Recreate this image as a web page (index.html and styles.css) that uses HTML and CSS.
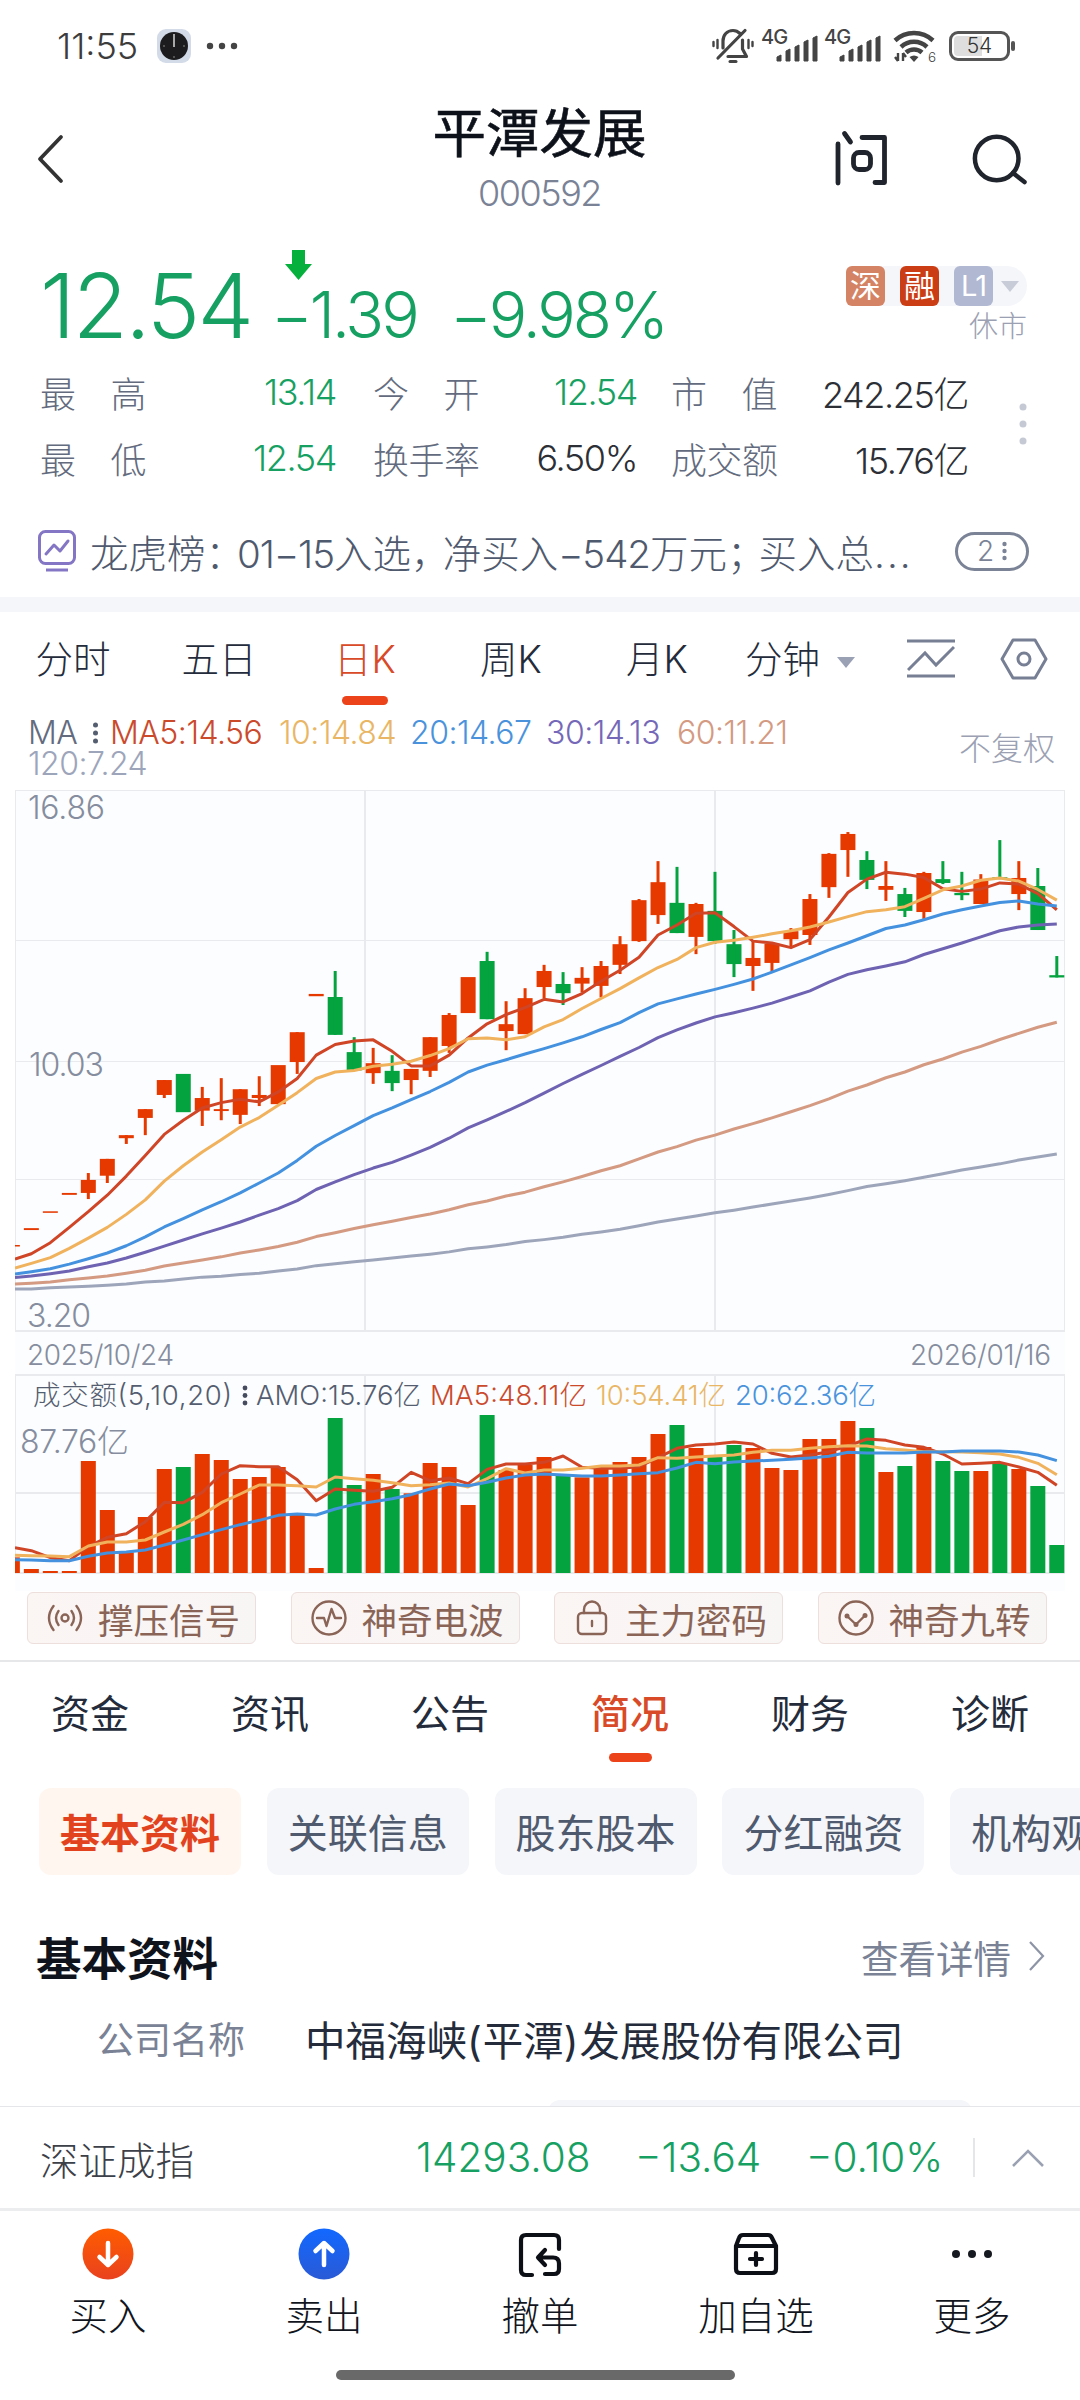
FILE: index.html
```html
<!DOCTYPE html>
<html lang="zh-CN">
<head>
    <meta charset="UTF-8">
    <meta name="viewport" content="width=device-width, initial-scale=1.0">
    <title>平潭发展 000592</title>
    <link rel="stylesheet" href="styles.css">
</head>
<body>
    <div class="status-bar">
        <span class="clock">11:55</span>
        <svg class="app-icon" width="34" height="34" viewBox="0 0 34 34"><rect width="34" height="34" rx="9" fill="#d3dbe8"/><circle cx="17" cy="17" r="14" fill="#1c1c1e"/><path d="M17 5v13" stroke="#ccc" stroke-width="1.6"/><path d="M6 17h2M26 17h2M17 27v2" stroke="#888"/></svg>
        <svg class="dots" width="32" height="8" viewBox="0 0 32 8" fill="#444"><circle cx="4" cy="4" r="3.2"/><circle cx="16" cy="4" r="3.2"/><circle cx="28" cy="4" r="3.2"/></svg>
        <div class="status-right">
            <svg width="42" height="36" viewBox="0 0 42 36" fill="none" stroke="#444" stroke-width="3.2" stroke-linecap="round" stroke-linejoin="round"><path d="M11 20v-7c0-6 4-10.500 10-10.500 3 0 5 1 7 3M16 28.500h18.500l-4-7.500v-9M33 2.500L6 30"/><path d="M18 33.500h6" stroke-width="3"/><path d="M5.500 12v8M1.500 14v4M36.500 12v8M40.500 14v4" stroke-width="2.400"/></svg>
            <div class="signal"><span>4G</span><svg width="42" height="27" viewBox="0 0 42 27" fill="#444" stroke="#444" stroke-linejoin="round"><path d="M1 26v-4l4-2v6zM10 26V16l4-2v12zM19 26V12l4-2v16zM28 26V7l4-2v21zM37 26V3l4-2v25z"/></svg></div>
            <div class="signal"><span>4G</span><svg width="42" height="27" viewBox="0 0 42 27" fill="#444" stroke="#444" stroke-linejoin="round"><path d="M1 26v-4l4-2v6zM10 26V16l4-2v12zM19 26V12l4-2v16zM28 26V7l4-2v21zM37 26V3l4-2v25z"/></svg></div>
            <svg class="wifi" width="44" height="34" viewBox="0 0 44 34" fill="none" stroke="#444" stroke-width="4.500"><path d="M2 11.500a28 28 0 0 1 38 0M8 18a19 19 0 0 1 26 0M13 23.500a12 12 0 0 1 16 0"/><path d="M16.500 28q4.500-3 9 0L21 33z" fill="#444" stroke="none"/><path d="M5 24v8M10 24v8M2 28l3 4M13 28l-3-4" stroke-width="2.400"/><text x="35" y="33" font-size="13.500" fill="#444" stroke="none">6</text></svg>
            <div class="battery"><span>54</span></div>
        </div>
    </div>

    <header class="header">
        <svg class="back" width="28" height="50" viewBox="0 0 28 50" fill="none" stroke="#333" stroke-width="3.800" stroke-linecap="round" stroke-linejoin="round"><path d="M25 3L4 25l21 22"/></svg>
        <div class="title">
            <h1>平潭发展</h1>
            <p>000592</p>
        </div>
        <svg class="ask" width="54" height="58" viewBox="0 0 54 58" fill="none" stroke="#20242c" stroke-width="4.800" stroke-linecap="round" stroke-linejoin="round"><path d="M4 14v39M10.500 3.500l6 8.500M28 7.500h22.500v45H41"/><rect x="19.500" y="22.500" width="17" height="17" rx="5.500"/></svg>
        <svg class="search" width="56" height="52" viewBox="0 0 56 52" fill="none" stroke="#20242c" stroke-width="4.500" stroke-linecap="round"><circle cx="24.700" cy="24.500" r="21.800"/><path d="M41 39l11.500 9"/></svg>
    </header>

    <section class="quote">
        <div class="price-row">
            <span class="price">12.54</span>
            <svg class="arrow" width="27" height="30" viewBox="0 0 27 30"><path d="M7 0h13v14h7L13.500 30 0 14h7z" fill="#06b03c"/></svg>
            <span class="change">−1.39</span>
            <span class="percent">−9.98%</span>
            <div class="market">
                <div class="badges">
                    <i class="badge sz">深</i><i class="badge rong">融</i><i class="badge level">L1</i><b class="caret"></b>
                </div>
                <div class="closed">休市</div>
            </div>
        </div>
        <div class="stats">
            <div class="stat"><label>最<em></em>高</label><span class="green">13.14</span></div>
            <div class="stat"><label>今<em></em>开</label><span class="green">12.54</span></div>
            <div class="stat"><label>市<em></em>值</label><span>242.25亿</span></div>
            <div class="stat"><label>最<em></em>低</label><span class="green">12.54</span></div>
            <div class="stat"><label>换手率</label><span>6.50%</span></div>
            <div class="stat"><label>成交额</label><span>15.76亿</span></div>
            <svg class="stat-more" width="8" height="42" viewBox="0 0 8 42" fill="#c4c9d4"><circle cx="4" cy="4" r="3.500"/><circle cx="4" cy="21" r="3.500"/><circle cx="4" cy="38" r="3.500"/></svg>
        </div>
        <div class="news">
            <svg width="38" height="42" viewBox="0 0 38 42" fill="none" stroke="#8476c4" stroke-width="3"><rect x="1.500" y="1.500" width="35" height="32" rx="6"/><path d="M8 24l8-9 6 6 8-10" stroke-linecap="round" stroke-linejoin="round"/><path d="M8 40h22"/></svg>
            <p>龙虎榜<i>：</i><span>01−15</span>入选<i>，</i>净买入<span>−542</span>万元<i>；</i>买入总<b>...</b></p>
            <div class="news-count">2<svg width="5" height="20" viewBox="0 0 5 20" fill="#7b8397"><circle cx="2.500" cy="3" r="2.200"/><circle cx="2.500" cy="10" r="2.200"/><circle cx="2.500" cy="17" r="2.200"/></svg></div>
        </div>
    </section>

    <nav class="periods">
        <a>分时</a><a>五日</a><a class="active">日K</a><a>周K</a><a>月K</a><a class="minute">分钟<b class="caret dark"></b></a>
        <svg class="trend" width="48" height="40" viewBox="0 0 48 40" fill="none" stroke="#777f94" stroke-width="3"><path d="M0 2h48M0 37h48M1 31l17-17 11 12L47 8"/></svg>
        <svg class="setting" width="48" height="42" viewBox="0 0 48 42" fill="none" stroke="#777f94" stroke-width="3" stroke-linejoin="round"><path d="M13 2h22l11 19-11 19H13L2 21z"/><circle cx="24" cy="21" r="6"/></svg>
    </nav>

    <div class="ma-row">
        <div class="ma">
            <span class="ma-name">MA</span><svg width="5" height="22" viewBox="0 0 5 22" fill="#555e70"><circle cx="2.500" cy="3" r="2.500"/><circle cx="2.500" cy="11" r="2.500"/><circle cx="2.500" cy="19" r="2.500"/></svg><span class="ma5">MA5:14.56</span><span class="ma10">10:14.84</span><span class="ma20">20:14.67</span><span class="ma30">30:14.13</span><span class="ma60">60:11.21</span>
            <div class="ma120">120:7.24</div>
        </div>
        <span class="adjust">不复权</span>
    </div>

    <svg class="chart" viewBox="15 789 1050 802" width="1050" height="802">
        <rect x="15" y="790" width="1050" height="801" fill="#fcfdff"/>
        <g stroke="#e9eaee" fill="none">
            <path d="M15 790.500h1050M15 940.500h1050M15 1061.500h1050M15 1179.500h1050M15.500 790V1331M1064.500 790V1331M15.500 1375V1573M1064.500 1375V1573"/>
            <path d="M15 1331h1050M15 1375h1050M15 1493h1050M15 1573h1050M365 790V1331M715 790V1331M365 1375V1573M715 1375V1573" stroke-width="2"/>
        </g>
        <g id="plot"></g>
        <g class="axis">
            <text x="28" y="818.500" textLength="77">16.86</text>
            <text x="29" y="1075.500" textLength="75">10.03</text>
            <text x="27" y="1327" textLength="64">3.20</text>
            <g class="date">
                <text x="27" y="1364.500" textLength="147">2025/10/24</text>
                <text x="910" y="1364.500" textLength="141">2026/01/16</text>
            </g>
            <text class="max" x="20" y="1453" textLength="109">87.76亿</text>
        </g>
        <g class="vol-head">
            <text x="33" y="1405" textLength="199" fill="#555e70">成交额(5,10,20)</text>
            <g fill="#444c5e"><circle cx="245" cy="1388" r="2.400"/><circle cx="245" cy="1395.500" r="2.400"/><circle cx="245" cy="1403" r="2.400"/></g>
            <text x="256" y="1405" textLength="165" fill="#555e70">AMO:15.76亿</text>
            <text x="430" y="1405" textLength="157" fill="#cb4a2c">MA5:48.11亿</text>
            <text x="596" y="1405" textLength="130" fill="#e9b665">10:54.41亿</text>
            <text x="735" y="1405" textLength="141" fill="#4a93dc">20:62.36亿</text>
        </g>
    </svg>

    <div class="signals">
        <a><svg width="36" height="36" viewBox="0 0 36 36"><circle cx="18" cy="18" r="3.500"/><path d="M11.500 11q-5 7 0 14M24.500 11q5 7 0 14M6.500 6q-9 12 0 24M29.500 6q9 12 0 24"/></svg>撑压信号</a>
        <a><svg width="36" height="36" viewBox="0 0 36 36"><circle cx="18" cy="18" r="16.500"/><path d="M6 18h7l2.500 8L20.500 9l3.500 9h6"/></svg>神奇电波</a>
        <a><svg width="36" height="36" viewBox="0 0 36 36"><rect x="4" y="13" width="28" height="21" rx="4"/><path d="M10 13V9.500a8 8 0 0 1 16 0V13M18 21v5"/></svg>主力密码</a>
        <a><svg width="36" height="36" viewBox="0 0 36 36"><circle cx="18" cy="18" r="16.500"/><path d="M9 16l9 8.500 9-9"/><g fill="#8a6557" stroke="none"><circle cx="9" cy="16" r="2.500"/><circle cx="18" cy="24.500" r="2.500"/><circle cx="27" cy="15.500" r="2.500"/></g></svg>神奇九转</a>
    </div>

    <nav class="tabs">
        <a>资金</a><a>资讯</a><a>公告</a><a class="active">简况</a><a>财务</a><a>诊断</a>
    </nav>

    <div class="pills">
        <a class="active">基本资料</a><a>关联信息</a><a>股东股本</a><a>分红融资</a><a>机构观点</a>
    </div>

    <section class="profile">
        <div class="profile-head">
            <h2>基本资料</h2>
            <a>查看详情<svg width="18" height="30" viewBox="0 0 18 30" fill="none" stroke="#8d94a6" stroke-width="2.200"><path d="M2 1l13 14L2 29"/></svg></a>
        </div>
        <div class="profile-row"><label>公司名称</label><span>中福海峡<i>(</i>平潭<i>)</i>发展股份有限公司</span></div>
        <div class="next-card"></div>
    </section>

    <div class="index-row">
        <span class="index-name">深证成指</span>
        <span class="v1">14293.08</span>
        <span class="v2">−13.64</span>
        <span class="v3">−0.10%</span>
        <svg width="32" height="18" viewBox="0 0 32 18" fill="none" stroke="#9aa1b3" stroke-width="2.600"><path d="M1 17L16 2l15 15"/></svg>
    </div>

    <footer class="actions">
        <a><svg width="52" height="52" viewBox="0 0 52 52"><defs><linearGradient id="buy" x2="0" y2="1"><stop stop-color="#ff5c00"/><stop offset="1" stop-color="#e9421f"/></linearGradient></defs><circle cx="26" cy="26" r="25.500" fill="url(#buy)"/><path d="M26 15v21M17.500 29l8.500 8 8.500-8" fill="none" stroke="#fff" stroke-width="4.500" stroke-linecap="round" stroke-linejoin="round"/></svg>买入</a>
        <a><svg width="52" height="52" viewBox="0 0 52 52"><defs><linearGradient id="sell" x2="0" y2="1"><stop stop-color="#1268ff"/><stop offset="1" stop-color="#2a5ad6"/></linearGradient></defs><circle cx="26" cy="26" r="25.500" fill="url(#sell)"/><path d="M26 37V16M17.500 23l8.500-8 8.500 8" fill="none" stroke="#fff" stroke-width="4.500" stroke-linecap="round" stroke-linejoin="round"/></svg>卖出</a>
        <a><svg width="52" height="52" viewBox="0 0 52 52" fill="none" stroke="#0c0f16" stroke-width="4.200" stroke-linecap="round" stroke-linejoin="round"><path d="M45 21V12q0-5-5-5H12q-5 0-5 5v30q0 5 5 5h6M31 22l-7 7.500 7 7.500M25 29.500h14q6 0 6 6V41q0 5-5 5h-9"/></svg>撤单</a>
        <a><svg width="52" height="52" viewBox="0 0 52 52" fill="none" stroke="#0c0f16" stroke-width="4.200" stroke-linecap="round" stroke-linejoin="round"><path d="M6 18l3-8q1-3 4-3h25q3 0 4 3l4 8v23q0 4-4 4H10q-4 0-4-4zM6 18h40M26 25v12M20 31h12"/></svg>加自选</a>
        <a><svg width="52" height="52" viewBox="0 0 52 52" fill="#16191f"><circle cx="10" cy="26" r="4"/><circle cx="26" cy="26" r="4"/><circle cx="42" cy="26" r="4"/></svg>更多</a>
    </footer>
    <div class="home-bar"></div>

    <script src="chart.js"></script>
</body>
</html>
```

FILE: styles.css
```css
* { box-sizing: border-box; }
body { margin: 0; width: 1080px; height: 2400px; overflow: hidden; background: #fff; color: #242c3b; font-family: Inter, "Noto Sans CJK SC", sans-serif; font-weight: 300; display: flex; flex-direction: column; }
h1, h2, p { margin: 0; }
i, em { font-style: normal; }
svg { flex: none; display: block; }
.green { color: #16a163; }

.status-bar { height: 92px; display: flex; align-items: center; padding-left: 57px; flex: none; }
.clock { font-size: 36px; color: #3c3c3c; width: 100px; letter-spacing: 0; }
.dots { margin-left: 15px; }
.status-right { margin-left: auto; padding-right: 70px; display: flex; align-items: center; }
.signal { width: 56px; height: 31px; position: relative; margin-left: 7px; }
.signal span { position: absolute; left: 0; top: -4px; font-size: 20px; line-height: 20px; color: #444; font-weight: 500; letter-spacing: -1px; }
.signal svg { margin: 4px 0 0 15px; }
.wifi { margin-left: 13px; overflow: visible; }
.battery { width: 61px; height: 30px; border: 3px solid #555; border-radius: 9px; margin-left: 12px; position: relative; padding: 2px; background: linear-gradient(90deg, #dedede 54%, #fff 54%) content-box; text-align: center; font-size: 21px; line-height: 20px; color: #333; }
.battery::after { content: ""; position: absolute; right: -8px; top: 7px; width: 4px; height: 10px; border-radius: 2px; background: #555; }

.header { height: 138px; display: flex; flex: none; position: relative; }
.title { flex: 1; text-align: center; padding-left: 114px; margin-right: -67px; }
.title h1 { font-size: 53.500px; line-height: 56px; font-weight: 400; color: #0d111a; margin-top: 14px; -webkit-text-stroke: .6px #0d111a; }
.title p { font-size: 36px; line-height: 40px; margin-top: 11px; color: #7a8296; letter-spacing: -1.500px; }
.back { margin: 42px 0 0 36px; }
.ask { margin: 38px 84px 0 0; }
.search { margin: 42px 52px 0 0; }

.quote { height: 367px; flex: none; }
.price-row { height: 130px; display: flex; align-items: baseline; position: relative; color: #16a163; padding-left: 40px; line-height: 1; }
.price { font-size: 90px; padding-top: 31px; letter-spacing: -2.700px; width: 231px; }
.change { font-size: 64px; width: 179px; letter-spacing: -3px; }
.percent { font-size: 64px; letter-spacing: -3px; }
.arrow { position: absolute; left: 285px; top: 20px; }
.market { margin-left: auto; align-self: flex-start; padding: 36px 53px 0 0; }
.badges { display: flex; gap: 15px; background: #f5f6fa; border-radius: 10px 20px 20px 10px; width: 181px; align-items: center; }
.badge { width: 39px; height: 40px; border-radius: 6px; color: #fff; font-size: 31px; line-height: 39px; text-align: center; font-weight: 400; }
.sz { background: #d48464; }
.rong { background: #cb3d14; }
.level { background: #b1b8d2; letter-spacing: -1px; font-size: 29px; }
.caret { border: 9px solid transparent; border-top: 11px solid #c8ccd8; border-bottom: 0; margin-left: -7px; }
.caret.dark { border-top-color: #9aa1b5; margin: 5px 0 0 17px; }
.closed { font-size: 29px; line-height: 36px; text-align: right; color: #9ba1b3; margin-top: 3px; }

.stats { display: grid; grid-template-columns: 333px 298px 1fr; row-gap: 13px; padding: 5px 0 0 40px; position: relative; width: 968px; }
.stat { display: flex; height: 53px; align-items: center; justify-content: space-between; font-size: 36px; letter-spacing: -1.400px; color: #2c2f36; white-space: nowrap; }
.stat label { color: #636b7e; width: 106px; display: flex; letter-spacing: -.500px; }
.stat em { width: 36px; }
.stat:nth-child(3n+1) { padding-right: 37px; }
.stat:nth-child(3n+2) { padding-right: 34px; }
.stat-more { position: absolute; left: 1019px; top: 43px; }

.news { display: flex; align-items: center; margin-top: 38px; padding: 0 51px 0 38px; height: 58px; }
.news p { margin-left: 14px; font-size: 38.500px; color: #505a6e; white-space: nowrap; flex: 1; }
.news i { margin-right: -7px; }
.news span { letter-spacing: -1px; }
.news b { font-weight: 300; letter-spacing: 2px; }
.news-count { width: 74px; height: 39px; border: 3px solid #7b8397; border-radius: 20px; display: flex; align-items: center; justify-content: center; gap: 8px; font-size: 28px; color: #7b8397; }

.periods { height: 104px; border-top: 15px solid #f5f6fa; flex: none; display: flex; position: relative; font-size: 37.500px; }
.periods a { width: 146px; text-align: center; line-height: 95px; position: relative; flex: none; white-space: nowrap; }
.periods .active { color: #d84a28; }
.periods .active::after { content: ""; position: absolute; left: 50%; margin-left: -23px; top: 84px; width: 46px; height: 9px; border-radius: 5px; background: #ec431b; }
.periods .minute { display: flex; align-items: center; padding-left: 15px; width: 177px; height: 95px; }
.trend { margin: 27px 45px 0 0; }
.setting { margin-top: 26px; }

.ma-row { height: 88px; flex: none; display: flex; justify-content: space-between; padding: 15px 25px 0 28px; font-size: 32px; line-height: 33px; letter-spacing: -.500px; }
.ma { display: flex; flex-wrap: wrap; align-items: center; width: 800px; align-content: flex-start; }
.ma svg { margin: 0 12px 0 0; }
.ma-name { width: 65px; color: #636b7e; }
.ma5 { color: #cb4a2c; width: 169px; }
.ma10 { color: #e9b665; width: 131px; }
.ma20 { color: #4a93dc; width: 136px; }
.ma30 { color: #7568b8; width: 131px; }
.ma60 { color: #d49a82; }
.ma120 { color: #9da5bb; width: 100%; line-height: 30px; }
.adjust { color: #9ba1b3; margin-top: 16px; letter-spacing: 0; }

.chart { margin: 0 15px; flex: none; }
.axis { font-size: 32px; fill: #858d9e; }
.axis .date { font-size: 28px; }
.vol-head { font-size: 27.500px; }

.signals { display: flex; height: 69px; flex: none; padding: 1px 0 0 27px; gap: 34.500px; }
.signals a { width: 229px; height: 52px; border: 1.500px solid #ecdfdc; border-radius: 6px; background: linear-gradient(90deg, #fbf5f4, #f8f6f5); display: flex; align-items: center; padding-left: 19px; font-size: 35.500px; font-weight: 400; color: #8a6557; }
.signals svg { margin-right: 15px; fill: none; stroke: #8a6557; stroke-width: 2.400; stroke-linecap: round; stroke-linejoin: round; }

.tabs { display: flex; height: 128px; flex: none; border-top: 2px solid #e6e7e9; font-size: 39px; font-weight: 400; }
.tabs a { flex: 1; text-align: center; line-height: 103px; position: relative; }
.tabs .active { color: #d84a28; font-weight: 500; }
.tabs .active::after { content: ""; position: absolute; left: 69px; top: 91px; width: 43px; height: 9px; border-radius: 5px; background: #ec431b; }

.pills { display: flex; flex: none; gap: 25.800px; padding-left: 39px; height: 87px; overflow: hidden; }
.pills a { flex: none; width: 202px; border-radius: 12px; background: #f4f6fa; color: #505a6e; font-size: 40px; line-height: 91px; text-align: center; font-weight: 400; }
.pills .active { background: #fff6f0; color: #e2431e; font-weight: 700; }

.profile { height: 232px; flex: none; overflow: hidden; border-bottom: 1.500px solid #e4e6ea; position: relative; }
.profile-head { display: flex; justify-content: space-between; align-items: center; padding: 43px 34px 0 36px; height: 119px; }
.profile-head h2 { font-size: 45.500px; color: #0f131c; font-weight: 700; }
.profile-head a { font-size: 37.500px; color: #7a8296; display: flex; align-items: center; gap: 17px; font-weight: 400; }
.profile-row { display: flex; align-items: center; height: 94px; padding-left: 97px; margin-top: -3px; font-size: 40.500px; font-weight: 400; }
.profile-row label { width: 208px; font-size: 37px; color: #7a8296; }
.profile-row i { letter-spacing: 1px; }
.next-card { width: 424px; height: 40px; margin: 15px 0 0 548px; border-radius: 12px; background: #f4f6fa; }

.index-row { height: 104px; flex: none; border-bottom: 3px solid #ebedee; display: flex; align-items: center; padding-left: 40px; font-size: 40.500px; color: #16a163; }
.index-name { width: 376px; font-size: 38.500px; color: #3c4048; }
.v1 { width: 219px; }
.v2 { width: 171px; }
.v3 { width: 169px; height: 39px; line-height: 40px; border-right: 2px solid #e4e6ea; }
.index-row svg { margin-left: 37px; }

.actions { display: flex; flex: none; height: 159px; padding-top: 17px; }
.actions a { flex: 1; display: flex; flex-direction: column; align-items: center; font-size: 38.500px; line-height: 50px; color: #11151d; gap: 11px; }
.home-bar { width: 399px; height: 10px; border-radius: 5px; background: #696969; margin-left: 336px; }
```

FILE: chart.js
```js
// candle: [high, open/close top, open/close bottom, low, up]
const candles = [
    [1215, 1215, 1219, 1219, 1], [1171, 1171, 1176, 1176, 1], [1127, 1127, 1131, 1131, 1], [1079, 1079, 1084, 1084, 1],
    [1027, 1045, 1079, 1095, 1], [990, 990, 1034, 1053, 1], [928, 928, 936, 951, 1], [860, 860, 883, 928, 1],
    [784, 784, 823, 831, 1], [768, 768, 868, 868, 0], [802, 831, 864, 904, 1], [779, 860, 865, 889, 1],
    [808, 808, 875, 899, 1], [774, 823, 831, 852, 1], [745, 745, 847, 847, 1], [659, 659, 737, 768, 1],
    [559, 559, 565, 565, 1], [499, 567, 666, 666, 0], [672, 711, 759, 759, 0], [700, 740, 766, 794, 1],
    [719, 760, 792, 813, 0], [755, 755, 784, 821, 1], [672, 672, 760, 776, 1], [609, 614, 695, 713, 1],
    [515, 515, 609, 609, 1], [449, 473, 625, 625, 0], [578, 638, 656, 706, 1], [544, 570, 664, 664, 1],
    [483, 499, 541, 570, 1], [502, 533, 557, 588, 0], [489, 517, 532, 555, 1], [473, 486, 538, 568, 1],
    [408, 429, 483, 507, 1], [311, 314, 421, 423, 1], [212, 267, 353, 376, 1], [227, 321, 400, 400, 0],
    [321, 324, 410, 455, 1], [240, 342, 421, 428, 0], [392, 429, 481, 515, 0], [420, 465, 486, 551, 1],
    [428, 428, 478, 500, 1], [387, 395, 416, 437, 1], [298, 311, 405, 431, 1], [191, 193, 280, 308, 1],
    [136, 141, 183, 253, 1], [186, 209, 261, 285, 0], [212, 277, 287, 316, 1], [282, 298, 342, 358, 0],
    [240, 243, 345, 363, 1], [212, 259, 269, 272, 0], [240, 295, 301, 314, 0], [246, 260, 324, 324, 1],
    [157, 254, 259, 259, 0], [212, 256, 298, 340, 1], [230, 277, 392, 392, 0], [460, 510, 516, 516, 0]
];

const volumes = [712, 747, 753, 753, 423, 570, 697, 591, 447, 441, 402, 420, 477, 471, 441, 583, 744, 294, 495, 462, 507, 520, 429, 441, 555, 285, 450, 435, 411, 465, 472, 444, 426, 411, 342, 315, 384, 408, 375, 384, 444, 450, 357, 357, 303, 324, 456, 438, 381, 423, 453, 453, 430, 447, 498, 675];

const priceLines = [
    ['#9da5bb', [1330, 1330, 1327, 1325, 1323, 1320, 1317, 1312, 1309, 1304, 1299, 1297, 1292, 1289, 1283, 1278, 1269, 1264, 1259, 1254, 1249, 1244, 1239, 1233, 1225, 1220, 1214, 1206, 1201, 1195, 1187, 1181, 1174, 1165, 1155, 1147, 1139, 1131, 1124, 1116, 1108, 1100, 1092, 1083, 1073, 1062, 1055, 1047, 1038, 1029, 1019, 1011, 1003, 993, 985, 977]],
    ['#d49a82', [1317, 1315, 1312, 1306, 1301, 1296, 1289, 1281, 1270, 1262, 1254, 1246, 1236, 1228, 1219, 1208, 1193, 1183, 1172, 1162, 1153, 1143, 1134, 1123, 1110, 1100, 1087, 1077, 1063, 1050, 1036, 1021, 1008, 990, 972, 958, 941, 928, 912, 898, 883, 867, 851, 833, 813, 797, 778, 763, 744, 729, 711, 696, 678, 662, 646, 633]],
    ['#6e62b2', [1300, 1296, 1290, 1283, 1272, 1262, 1249, 1234, 1218, 1202, 1186, 1171, 1155, 1137, 1120, 1099, 1070, 1050, 1031, 1014, 999, 980, 960, 936, 909, 888, 866, 843, 818, 793, 769, 746, 722, 699, 673, 653, 635, 619, 608, 596, 583, 567, 551, 528, 508, 496, 486, 475, 456, 441, 426, 410, 394, 384, 379, 376]],
    ['#cf4526', [1252, 1238, 1209, 1169, 1128, 1085, 1035, 981, 926, 889, 857, 843, 834, 841, 815, 780, 719, 691, 682, 679, 709, 747, 747, 719, 674, 637, 613, 595, 573, 580, 558, 526, 497, 463, 405, 379, 348, 347, 383, 421, 426, 438, 417, 358, 294, 259, 241, 246, 255, 284, 291, 285, 269, 272, 297, 339]],
    ['#f0b25c', [1275, 1263, 1248, 1224, 1197, 1169, 1135, 1097, 1048, 1008, 972, 940, 907, 882, 850, 817, 780, 763, 759, 748, 743, 735, 720, 702, 676, 674, 679, 671, 645, 626, 597, 571, 545, 517, 490, 469, 438, 424, 419, 411, 402, 394, 384, 371, 357, 344, 339, 331, 309, 287, 277, 262, 256, 264, 286, 314]],
    ['#4391df', [1291, 1285, 1277, 1265, 1251, 1236, 1217, 1194, 1168, 1146, 1123, 1102, 1079, 1053, 1027, 994, 957, 929, 903, 877, 857, 835, 814, 790, 763, 745, 731, 716, 702, 687, 671, 652, 634, 608, 585, 572, 559, 547, 534, 520, 502, 483, 464, 444, 426, 407, 388, 379, 365, 350, 339, 329, 320, 316, 324, 329]]
];

const volumeLines = [
    ['#cf4526', [683, 692, 713, 722, 680, 652, 641, 605, 547, 548, 517, 462, 437, 440, 440, 479, 542, 507, 511, 514, 502, 457, 482, 474, 491, 448, 432, 432, 427, 408, 442, 445, 445, 440, 413, 385, 375, 372, 366, 372, 400, 411, 405, 395, 378, 357, 361, 375, 382, 402, 432, 430, 427, 441, 457, 496]],
    ['#f0b25c', [706, 707, 708, 710, 678, 666, 666, 660, 636, 613, 584, 548, 522, 495, 495, 497, 501, 471, 476, 481, 488, 497, 494, 489, 501, 476, 446, 459, 450, 450, 445, 438, 438, 435, 413, 415, 411, 408, 405, 397, 391, 391, 385, 380, 377, 378, 386, 390, 395, 395, 396, 398, 402, 412, 430, 464]],
    ['#4391df', [719, 720, 722, 722, 709, 699, 696, 690, 675, 660, 644, 629, 614, 601, 586, 582, 585, 567, 553, 545, 536, 524, 507, 492, 497, 487, 474, 465, 462, 465, 468, 468, 465, 461, 458, 444, 427, 431, 426, 423, 421, 418, 414, 409, 397, 399, 399, 399, 396, 396, 393, 393, 393, 396, 405, 422]]
];

const VOLUME_BASE = 1573;
const x = i => 31.35 + 18.99 * (i - 1);
const priceY = v => 780 + v / 2.613;
const volumeY = v => 1320 + v / 3;

function bar(cx, w, top, bottom) {
    // clip the first bar to the left edge of the chart
    const left = Math.max(15, cx - w / 2);
    return `<rect x="${left}" y="${top}" width="${cx + w / 2 - left}" height="${bottom - top}"/>`;
}

let out = '';
candles.forEach(([high, top, bottom, low, up], i) => {
    out += `<g fill="${up ? '#e63900' : '#04a33f'}">`;
    out += bar(x(i), 15, priceY(top), priceY(bottom));
    if (low - high > bottom - top) out += bar(x(i), 3, priceY(high), priceY(low));
    out += bar(x(i), 15, volumeY(volumes[i]), VOLUME_BASE) + '</g>';
});

function line([color, ys], y) {
    const points = ys.map((v, i) => `${i ? x(i) : 15},${y(v)}`).join(' ');
    out += `<polyline points="${points}" fill="none" stroke="${color}" stroke-width="3" stroke-linejoin="round"/>`;
}
priceLines.forEach(l => line(l, priceY));
volumeLines.forEach(l => line(l, volumeY));

document.getElementById('plot').innerHTML = out;
```
